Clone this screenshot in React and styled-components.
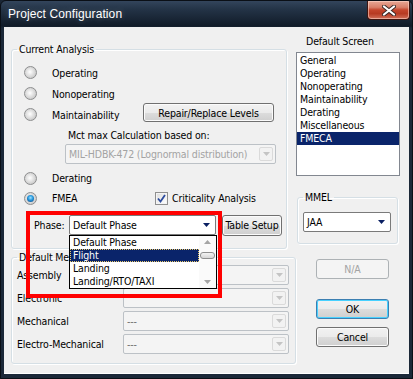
import React from 'react';
import styled, { createGlobalStyle, css } from 'styled-components';

const GlobalStyle = createGlobalStyle`
html, body {
  margin: 0;
  padding: 0;
  background: #1a2635;
}
body {
  font-family: "DejaVu Sans Condensed", "Liberation Sans", Arial, sans-serif;
  font-size: 10.5px;
  letter-spacing: -0.15px;
  color: #000;
}
`;

const Window = styled.div`
width: 413px;
height: 379px;
box-sizing: border-box;
border: 1px solid #0a0f16;
border-radius: 6px 6px 0 0;
background: linear-gradient(#33455c 0, #243447 8px, #111b28 25px, #1b2838 27px, #1b2838 100%);
display: flex;
flex-direction: column;
overflow: hidden;
`;

const TitleBar = styled.div`
height: 26px;
flex: none;
display: flex;
align-items: center;
padding-left: 7px;
color: #fff;
font-family: "Liberation Sans", Arial, sans-serif;
font-size: 12px;
letter-spacing: 0.1px;
`;

const Title = styled.span`
flex: 1;
text-shadow: 0 0 6px rgba(255, 255, 255, 0.25);
`;

const CloseButton = styled.div`
align-self: flex-start;
width: 43px;
height: 19px;
margin-right: 2px;
box-sizing: border-box;
border: 1px solid #3d1510;
border-top: none;
border-radius: 0 0 4px 4px;
background: linear-gradient(#e8a896 0, #d9806a 35%, #c4452c 50%, #b73a22 70%, #d2705a 100%);
box-shadow: inset 0 0 0 1px rgba(255, 220, 210, 0.55);
display: flex;
align-items: center;
justify-content: center;
`;

const Client = styled.div`
flex: 1;
margin: 0 3px 4px;
background: #f0f0f0;
display: flex;
padding: 7px 9px 0 7px;
box-sizing: border-box;
box-shadow: inset 0 -1px 0 #fff;
`;

const LeftColumn = styled.div`
width: 285px;
flex: none;
display: flex;
flex-direction: column;
padding-top: 8px;
`;

const RightColumn = styled.div`
width: 104px;
flex: none;
display: flex;
flex-direction: column;
`;

const Group = styled.fieldset`
margin: ${(p) => p.$mt || 0}px 0 0 ${(p) => p.$ml || 0}px;
padding: 0;
width: ${(p) => p.$w}px;
min-width: 0;
box-sizing: border-box;
border: 1px solid #d5dfe5;
border-radius: 3px;
box-shadow: inset 1px 1px 0 #fff, 1px 1px 0 #fff;
`;

const Legend = styled.legend`
margin-left: 5px;
padding: 0 2px;
line-height: 14px;
`;

const GroupBody = styled.div`
display: flex;
flex-direction: column;
padding: ${(p) => p.$pad};
`;

const Row = styled.div`
display: flex;
align-items: center;
height: ${(p) => p.$h || 20}px;
margin-top: ${(p) => p.$mt || 0}px;
padding-left: ${(p) => p.$pl || 0}px;
padding-right: ${(p) => p.$pr || 0}px;
position: relative;
`;

const Radio = styled.span`
width: 13px;
height: 13px;
flex: none;
box-sizing: border-box;
border-radius: 50%;
border: 1px solid #8d8e8f;
background: radial-gradient(circle at 45% 45%, #ffffff 0, #e6e6e6 35%, #c6c6c6 80%, #d8d8d8 100%);
margin-right: 15px;
position: relative;
${(p) =>
    p.$checked &&
    css`
      &::after {
        content: '';
        position: absolute;
        left: 2px;
        top: 2px;
        width: 7px;
        height: 7px;
        border-radius: 50%;
        background: radial-gradient(circle at 50% 40%, #9fe3ff 0, #2496dc 45%, #0c3d78 100%);
      }
    `}
`;

const RadioText = styled.span`
width: ${(p) => (p.$w ? `${p.$w}px` : 'auto')};
flex: none;
white-space: nowrap;
`;

const CheckBox = styled.span`
width: 13px;
height: 13px;
flex: none;
box-sizing: border-box;
border: 1px solid #8f8f8f;
background: linear-gradient(135deg, #dcdcdc 0, #f2f2f2 60%, #ffffff 100%);
box-shadow: inset 0 0 0 1px #f4f4f4;
margin-right: 4px;
display: flex;
align-items: center;
justify-content: center;
`;

const Label = styled.span`
width: ${(p) => (p.$w ? `${p.$w}px` : 'auto')};
flex: none;
white-space: nowrap;
color: ${(p) => p.$color || '#000'};
`;

const Button = styled.button`
width: ${(p) => p.$w}px;
height: ${(p) => p.$h || 20}px;
margin: ${(p) => p.$m || 0};
padding: 0;
flex: none;
font: inherit;
letter-spacing: inherit;
color: #000;
border: 1px solid #707070;
border-radius: 3px;
background: linear-gradient(#f2f2f2 0, #ebebeb 50%, #dddddd 50%, #cfcfcf 100%);
box-shadow: inset 0 0 0 1px #fbfbfb;
white-space: nowrap;
${(p) =>
    p.$focused &&
    css`
      border-color: #3c7fb1;
      box-shadow: inset 0 0 0 1px #48d1ff;
    `}
&:disabled {
  color: #a3a3a3;
  border-color: #adb2b5;
  background: #f4f4f4;
  box-shadow: none;
}
`;

const ComboBox = styled.div`
width: ${(p) => p.$w}px;
height: 20px;
margin-left: ${(p) => p.$ml || 0}px;
flex: none;
box-sizing: border-box;
display: flex;
align-items: stretch;
border: 1px solid ${(p) => (p.$disabled ? '#bcc1c6' : '#7a7a7a')};
border-radius: 2px;
background: ${(p) => (p.$disabled ? '#f4f4f4' : '#fff')};
padding: ${(p) => (p.$disabled ? '2px' : '0')};
position: relative;
`;

const ComboText = styled.span`
flex: 1;
display: flex;
align-items: center;
padding-left: ${(p) => p.$pl || 3}px;
white-space: nowrap;
overflow: hidden;
color: ${(p) => p.$color || '#000'};
`;

const ComboArrow = styled.span`
width: 18px;
flex: none;
display: flex;
align-items: center;
justify-content: center;
`;

const DisabledArrow = styled.span`
width: 14px;
flex: none;
box-sizing: border-box;
border: 1px solid #dadada;
border-radius: 2px;
background: #f2f2f2;
display: flex;
align-items: center;
justify-content: center;
`;

const ComboWrap = styled.div`
position: relative;
flex: none;
`;

const DropList = styled.div`
position: absolute;
top: 20px;
left: 0;
width: 148px;
height: 54px;
box-sizing: border-box;
border: 1px solid #000;
background: #fff;
display: flex;
z-index: 10;
`;

const DropItems = styled.div`
flex: 1;
display: flex;
flex-direction: column;
`;

const DropItem = styled.div`
height: 13px;
line-height: 13px;
padding-left: 3px;
white-space: nowrap;
box-sizing: border-box;
${(p) =>
    p.$selected &&
    css`
      background: #0a246a;
      color: #fff;
      outline: 1px dotted #e8c96a;
      outline-offset: -1px;
    `}
`;

const ScrollBar = styled.div`
width: 17px;
flex: none;
background: #fafafa;
display: flex;
flex-direction: column;
align-items: center;
justify-content: space-between;
padding: 4px 0 4px;
box-sizing: border-box;
`;

const ScrollThumb = styled.div`
width: 15px;
height: 7px;
box-sizing: border-box;
border: 1px solid #8e8f8f;
border-radius: 3px;
background: linear-gradient(#f3f3f3, #d6d6d6);
margin-top: -14px;
`;

const Highlight = styled.div`
position: absolute;
left: 14px;
top: -4px;
width: 196px;
height: 87px;
box-sizing: border-box;
border: 4px solid #ff0000;
z-index: 20;
pointer-events: none;
`;

const ScreenLabel = styled.div`
height: 14px;
line-height: 14px;
padding-left: 10px;
`;

const ListBox = styled.div`
margin-top: 4px;
height: 124px;
box-sizing: border-box;
border: 1px solid #828790;
background: #fff;
padding-top: 1px;
display: flex;
flex-direction: column;
`;

const ListItem = styled.div`
height: 13px;
line-height: 13px;
padding-left: 3px;
${(p) =>
    p.$selected &&
    css`
      background: #0a246a;
      color: #fff;
    `}
`;

const Arrow = ({ color = '#0a1f62', up = false }) => (
  <svg width="7" height="4" viewBox="0 0 7 4">
    <polygon points={up ? '0,4 7,4 3.5,0' : '0,0 7,0 3.5,4'} fill={color} />
  </svg>
);

const Combo = ({ w, ml, text }) => (
  <ComboBox $w={w} $ml={ml}>
    <ComboText>{text}</ComboText>
    <ComboArrow>
      <Arrow />
    </ComboArrow>
  </ComboBox>
);

const DisabledCombo = ({ w, ml, text, color }) => (
  <ComboBox $w={w} $ml={ml} $disabled>
    <ComboText $pl={1} $color={color}>
      {text}
    </ComboText>
    <DisabledArrow>
      <Arrow color="#c4c4c4" />
    </DisabledArrow>
  </ComboBox>
);

const screens = ['General', 'Operating', 'Nonoperating', 'Maintainability', 'Derating', 'Miscellaneous', 'FMECA'];
const phases = ['Default Phase', 'Flight', 'Landing', 'Landing/RTO/TAXI'];
const mechanisms = [
  { label: 'Assembly', value: '' },
  { label: 'Electronic', value: '' },
  { label: 'Mechanical', value: '---' },
  { label: 'Electro-Mechanical', value: '---' },
];

export default function App() {
  return (
    <>
      <GlobalStyle />
      <Window>
        <TitleBar>
          <Title>Project Configuration</Title>
          <CloseButton>
            <svg width="14" height="11" viewBox="0 0 14 11">
              <path d="M2 1.5 L12 9.5 M12 1.5 L2 9.5" stroke="#3a2a28" strokeWidth="4" strokeLinecap="round" />
              <path d="M2 1.5 L12 9.5 M12 1.5 L2 9.5" stroke="#ffffff" strokeWidth="2.2" strokeLinecap="round" />
            </svg>
          </CloseButton>
        </TitleBar>
        <Client>
          <LeftColumn>
            <Group $w={276}>
              <Legend>Current Analysis</Legend>
              <GroupBody $pad="6px 0 13px">
                <Row $h={21} $pl={12}>
                  <Radio />
                  <RadioText>Operating</RadioText>
                </Row>
                <Row $h={21} $pl={12}>
                  <Radio />
                  <RadioText>Nonoperating</RadioText>
                </Row>
                <Row $h={21} $pl={12} $pr={12}>
                  <Radio />
                  <RadioText>Maintainability</RadioText>
                  <Button $w={131} $h={19} $m="-4px 0 0 auto">
                    Repair/Replace Levels
                  </Button>
                </Row>
                <Row $h={19} $pl={56}>
                  <Label>Mct max Calculation based on:</Label>
                </Row>
                <Row $pl={53}>
                  <DisabledCombo w={211} text="MIL-HDBK-472 (Lognormal distribution)" color="#a3a3a3" />
                </Row>
                <Row $mt={4} $pl={12}>
                  <Radio />
                  <RadioText>Derating</RadioText>
                </Row>
                <Row $pl={12}>
                  <Radio $checked />
                  <RadioText $w={103}>FMEA</RadioText>
                  <CheckBox>
                    <svg width="9" height="9" viewBox="0 0 9 9">
                      <path d="M1 4.5 L3.5 7.5 L8 1" fill="none" stroke="#2d4c9e" strokeWidth="1.8" />
                    </svg>
                  </CheckBox>
                  <Label>Criticality Analysis</Label>
                </Row>
                <Row $mt={7} $pl={22}>
                  <Label $w={35}>Phase:</Label>
                  <ComboWrap>
                    <Combo w={147} text="Default Phase" />
                    <DropList>
                      <DropItems>
                        {phases.map((p) => (
                          <DropItem key={p} $selected={p === 'Flight'}>
                            {p}
                          </DropItem>
                        ))}
                      </DropItems>
                      <ScrollBar>
                        <Arrow color="#a5a5a5" up />
                        <ScrollThumb />
                        <Arrow color="#a5a5a5" />
                      </ScrollBar>
                    </DropList>
                  </ComboWrap>
                  <Button $w={60} $h={21} $m="0 0 0 6px">
                    Table Setup
                  </Button>
                  <Highlight />
                </Row>
              </GroupBody>
            </Group>
            <Group $w={285} $mt={1}>
              <Legend>Default Mechanisms</Legend>
              <GroupBody $pad="1px 0 9px 5px">
                {mechanisms.map((m, i) => (
                  <Row key={m.label} $mt={i ? 3 : 0}>
                    <Label $w={106}>{m.label}</Label>
                    <DisabledCombo w={166} text={m.value} color="#6d6d6d" />
                  </Row>
                ))}
              </GroupBody>
            </Group>
          </LeftColumn>
          <RightColumn>
            <ScreenLabel>Default Screen</ScreenLabel>
            <ListBox>
              {screens.map((s) => (
                <ListItem key={s} $selected={s === 'FMECA'}>
                  {s}
                </ListItem>
              ))}
            </ListBox>
            <Group $w={101} $mt={14} $ml={1}>
              <Legend>MMEL</Legend>
              <GroupBody $pad="8px 0 11px 5px">
                <Combo w={88} text="JAA" />
              </GroupBody>
            </Group>
            <Button $w={73} $m="15px 0 0 20px" disabled>
              N/A
            </Button>
            <Button $w={73} $m="20px 0 0 20px" $focused>
              OK
            </Button>
            <Button $w={73} $m="8px 0 0 20px">
              Cancel
            </Button>
          </RightColumn>
        </Client>
      </Window>
    </>
  );
}
